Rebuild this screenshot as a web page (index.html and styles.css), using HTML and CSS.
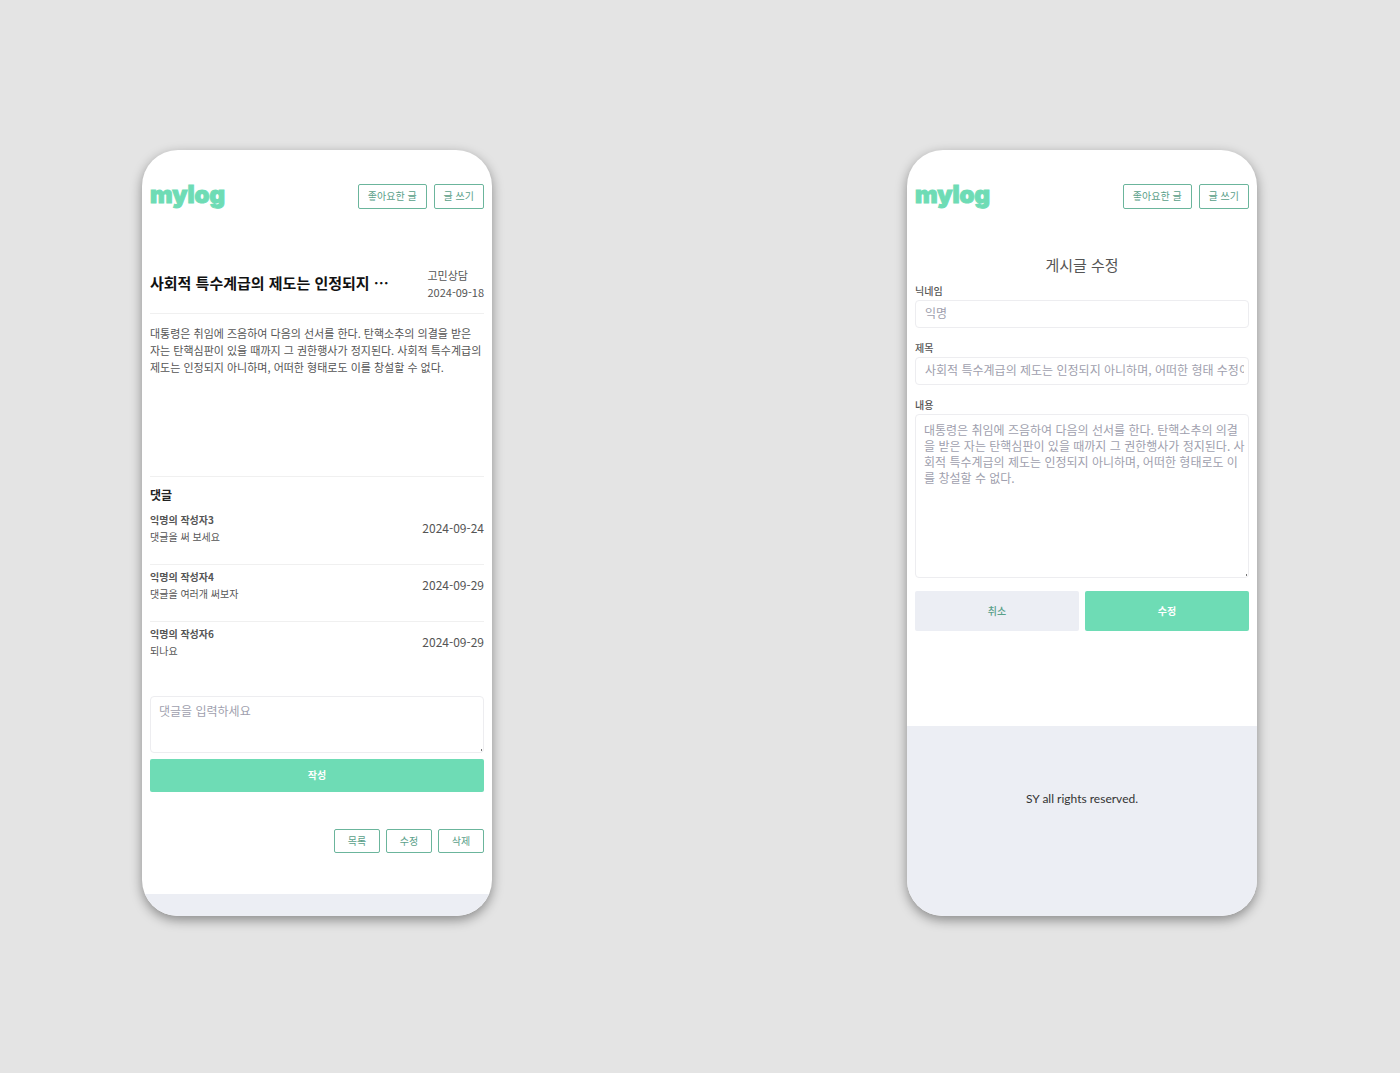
FILE: index.html
```html
<!DOCTYPE html>
<html lang="ko">
<head>
<meta charset="utf-8">
<meta name="viewport" content="width=device-width, initial-scale=1">
<title>mylog</title>
<link rel="stylesheet" href="styles.css">
</head>
<body>
<div class="stage">
  <section class="phone">
    <header class="topbar">
      <a class="logo" href="#">mylog</a>
      <nav class="actions">
        <button class="btn-outline" type="button">좋아요한 글</button>
        <button class="btn-outline" type="button">글 쓰기</button>
      </nav>
    </header>
    <main class="content post">
      <div class="post-head">
        <h1 class="post-title">사회적 특수계급의 제도는 인정되지 …</h1>
        <div class="post-meta">
          <span>고민상담</span>
          <time>2024-09-18</time>
        </div>
      </div>
      <p class="post-body">대통령은 취임에 즈음하여 다음의 선서를 한다. 탄핵소추의 의결을 받은 자는 탄핵심판이 있을 때까지 그 권한행사가 정지된다. 사회적 특수계급의 제도는 인정되지 아니하며, 어떠한 형태로도 이를 창설할 수 없다.</p>
      <h2 class="comments-title">댓글</h2>
      <ul class="comments">
        <li class="comment">
          <div><strong class="author">익명의 작성자3</strong><p class="text">댓글을 써 보세요</p></div>
          <time class="date">2024-09-24</time>
        </li>
        <li class="comment">
          <div><strong class="author">익명의 작성자4</strong><p class="text">댓글을 여러개 써보자</p></div>
          <time class="date">2024-09-29</time>
        </li>
        <li class="comment">
          <div><strong class="author">익명의 작성자6</strong><p class="text">되나요</p></div>
          <time class="date">2024-09-29</time>
        </li>
      </ul>
      <form class="comment-form">
        <textarea class="field area" aria-label="댓글" placeholder="댓글을 입력하세요"></textarea>
        <button class="btn-solid" type="button">작성</button>
      </form>
      <div class="actions post-actions">
        <button class="btn-outline" type="button">목록</button>
        <button class="btn-outline" type="button">수정</button>
        <button class="btn-outline" type="button">삭제</button>
      </div>
    </main>
    <footer class="footer"></footer>
  </section>

  <section class="phone">
    <header class="topbar">
      <a class="logo" href="#">mylog</a>
      <nav class="actions">
        <button class="btn-outline" type="button">좋아요한 글</button>
        <button class="btn-outline" type="button">글 쓰기</button>
      </nav>
    </header>
    <main class="content edit">
      <h1 class="edit-title">게시글 수정</h1>
      <form class="edit-form">
        <label class="label" for="nickname">닉네임</label>
        <input class="field" id="nickname" type="text" value="익명">
        <label class="label" for="subject">제목</label>
        <input class="field" id="subject" type="text" value="사회적 특수계급의 제도는 인정되지 아니하며, 어떠한 형태 수정이">
        <label class="label" for="body">내용</label>
        <textarea class="field area tall" id="body">대통령은 취임에 즈음하여 다음의 선서를 한다. 탄핵소추의 의결을 받은 자는 탄핵심판이 있을 때까지 그 권한행사가 정지된다. 사회적 특수계급의 제도는 인정되지 아니하며, 어떠한 형태로도 이를 창설할 수 없다.</textarea>
        <div class="form-actions">
          <button class="btn-solid muted" type="button">취소</button>
          <button class="btn-solid" type="button">수정</button>
        </div>
      </form>
    </main>
    <footer class="footer">SY all rights reserved.</footer>
  </section>
</div>
</body>
</html>
```
FILE: styles.css
```css
* {
  box-sizing: border-box;
}

body {
  margin: 0;
  background: #e4e4e4;
  color: #555;
  font-family: "Noto Sans CJK KR", sans-serif;
  font-size: 11px;
  line-height: 17px;
}

h1, h2, p, ul {
  margin: 0;
  padding: 0;
}

button, input, textarea {
  font-family: inherit;
  margin: 0;
}

.stage {
  display: flex;
  flex-wrap: wrap;
  justify-content: space-between;
  gap: 40px;
  min-height: 100vh;
  padding: 150px 143px 157px 142px;
}

.phone {
  display: flex;
  flex-direction: column;
  flex: 0 1 350px;
  min-height: 766px;
  overflow: hidden;
  border-radius: 36px;
  background: #fff;
  box-shadow: 0 4px 12px rgba(0, 0, 0, 0.4);
}

.topbar {
  display: flex;
  justify-content: space-between;
  align-items: center;
  height: 93px;
  padding: 0 8px;
}

.logo {
  padding-bottom: 4px;
  color: #6edcb5;
  font-family: Inter, sans-serif;
  font-size: 24px;
  font-weight: 900;
  line-height: 28px;
  text-decoration: none;
  -webkit-text-stroke: 1px #6edcb5;
}

.actions {
  display: flex;
  justify-content: flex-end;
  gap: 7px;
}

.btn-outline {
  height: 25px;
  padding: 0 9px 2px;
  border: 1px solid #6bb59c;
  border-radius: 2px;
  background: #fff;
  color: #5aa089;
  font-size: 10px;
  line-height: 15px;
}

.content {
  padding: 0 8px;
}

.post-head {
  display: flex;
  justify-content: space-between;
  align-items: center;
  margin-top: 16px;
  padding: 8px 0 12px;
  border-bottom: 1px solid #f0f0f0;
}

.post-title {
  padding-bottom: 2px;
  color: #111;
  font-size: 15px;
  font-weight: 700;
  line-height: 24px;
}

.post-meta {
  display: flex;
  flex-direction: column;
}

.post-body {
  min-height: 163px;
  padding-top: 11px;
  border-bottom: 1px solid #f0f0f0;
  word-break: keep-all;
}

.comments-title {
  margin-top: 9px;
  color: #222;
  font-size: 12px;
  font-weight: 700;
}

.comments {
  list-style: none;
  padding-top: 8px;
}

.comment {
  display: flex;
  justify-content: space-between;
  align-items: flex-start;
  min-height: 53px;
  font-size: 10px;
}

.comment + .comment {
  min-height: 57px;
  padding-top: 3px;
  border-top: 1px solid #f0f0f0;
}

.author {
  font-weight: 700;
}

.date {
  padding-top: 8px;
  font-size: 12px;
}

.comment-form {
  display: flex;
  flex-direction: column;
  gap: 6px;
  margin-top: 18px;
}

.field {
  display: block;
  width: 100%;
  height: 28px;
  padding: 0 4px 4px 9px;
  border: 1px solid #ededf0;
  border-radius: 4px;
  background: #fff;
  color: #a09fae;
  font-size: 12px;
  line-height: 16px;
}

.field::placeholder {
  color: #a09fae;
}

.area {
  height: 57px;
  padding: 6px 1px 6px 8px;
  overflow: hidden;
  resize: vertical;
  word-break: break-all;
}

.area::-webkit-resizer {
  background: linear-gradient(#777, #777) no-repeat right 1px bottom 1px / 1px 2px;
}

.area.tall {
  height: 164px;
  padding-top: 7px;
}

.btn-solid {
  height: 33px;
  padding: 0 0 2px;
  border: 0;
  border-radius: 2px;
  background: #6edcb5;
  color: #fff;
  font-size: 10px;
  font-weight: 700;
}

.post-actions {
  gap: 6px;
  margin: 37px 0 41px;
}

.post-actions .btn-outline {
  width: 46px;
  height: 24px;
  padding: 0 0 2px;
}

.footer {
  flex: 1;
  min-height: 22px;
  background: #eceef4;
  color: #333;
  font-family: Lato, sans-serif;
  font-size: 12px;
  text-align: center;
}

.edit-title {
  margin-top: 10px;
  font-size: 15px;
  font-weight: 400;
  line-height: 24px;
  text-align: center;
}

.edit-form {
  display: flex;
  flex-direction: column;
  padding-top: 5px;
}

.label {
  padding-bottom: 1px;
  font-size: 10px;
  font-weight: 500;
}

.field + .label {
  margin-top: 11px;
}

.form-actions {
  display: grid;
  grid-template-columns: 1fr 1fr;
  gap: 6px;
  margin-top: 13px;
}

.form-actions .btn-solid {
  height: 40px;
}

.form-actions .muted {
  background: #eceef4;
  color: #5aa089;
  font-weight: 500;
}

.edit + .footer {
  margin-top: 95px;
  padding-top: 64px;
}
```
